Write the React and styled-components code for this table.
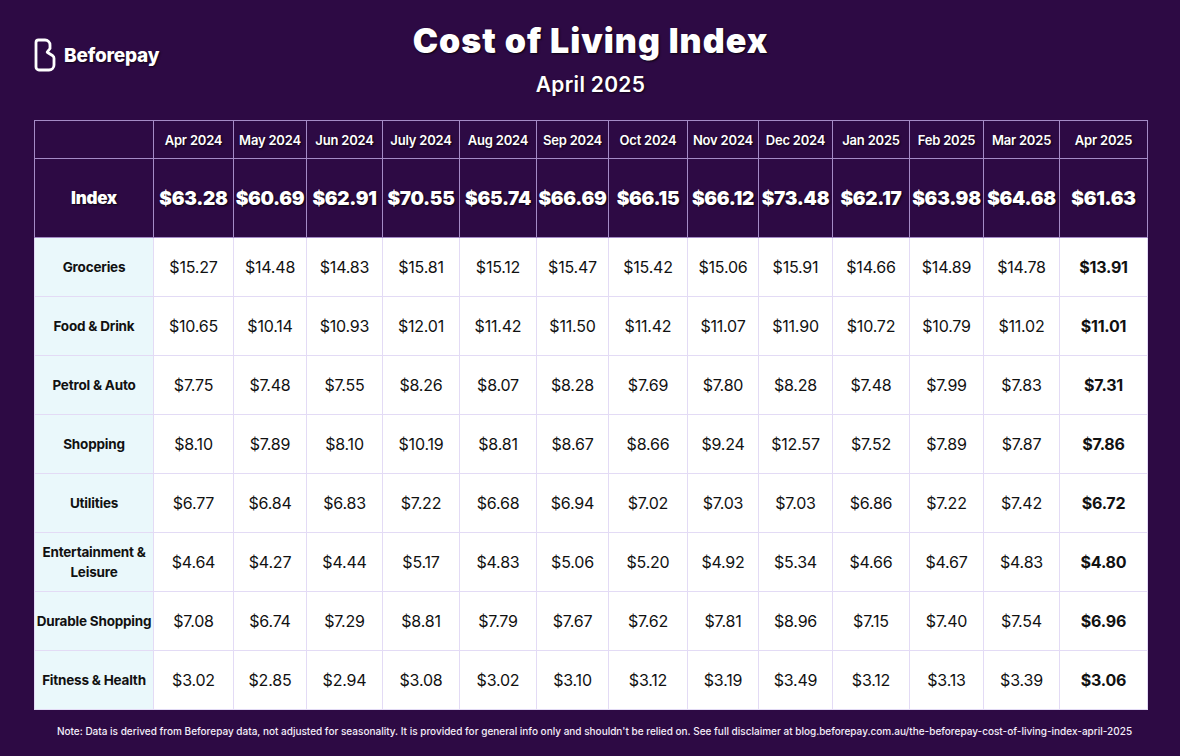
import React from "react";
import styled, { createGlobalStyle } from "styled-components";

const GlobalStyle = createGlobalStyle`
  html, body {
    margin: 0;
    padding: 0;
    background: #2d0a44;
  }
  body {
    font-family: Inter, "Noto Sans", "Liberation Sans", sans-serif;
  }
`;

const Page = styled.div`
  width: 1180px;
  height: 756px;
  box-sizing: border-box;
  padding: 0 33px 0 34px;
  background: #2d0a44;
  color: #ffffff;
  display: flex;
  flex-direction: column;
`;

const Header = styled.header`
  height: 120px;
  display: grid;
  grid-template-columns: 1fr auto 1fr;
  align-items: start;
`;

const Brand = styled.div`
  display: flex;
  align-items: center;
  gap: 8px;
  padding-top: 38px;
  font-size: 19px;
  font-weight: 800;
  letter-spacing: -0.2px;
  text-shadow: 1px 1px 2px rgba(0, 0, 0, 0.7);
`;

const TitleBlock = styled.div`
  display: flex;
  flex-direction: column;
  align-items: center;
  padding-top: 22px;
`;

const Title = styled.h1`
  margin: 0;
  font-size: 34px;
  line-height: 38px;
  font-weight: 900;
  letter-spacing: 1px;
  text-shadow: 1px 1px 2px rgba(0, 0, 0, 0.8);
`;

const Subtitle = styled.div`
  margin-top: 12px;
  font-size: 21px;
  font-weight: 600;
  letter-spacing: 0.3px;
  text-shadow: 1px 1px 2px rgba(0, 0, 0, 0.7);
`;

const Table = styled.table`
  width: 1113px;
  border-collapse: collapse;
  table-layout: fixed;
  border: 1px solid #1c0530;
`;

const HeadCell = styled.th`
  background: #2d0a44;
  border: 1px solid #a48bc6;
  color: #ffffff;
  text-align: center;
  padding: 0;
  height: ${(p) => (p.$tall ? "78px" : "37px")};
  font-size: ${(p) => (p.$tall ? (p.$label ? "17px" : "19px") : "13px")};
  font-weight: ${(p) => (p.$tall ? 900 : 600)};
  letter-spacing: ${(p) => (p.$tall ? "-0.3px" : "-0.2px")};
  white-space: nowrap;
  text-shadow: 1px 1px 2px rgba(0, 0, 0, 0.8);
`;

const LabelCell = styled.th`
  background: #eaf8fb;
  border: 1px solid #e3dbf5;
  color: #111111;
  height: 58px;
  padding: 0;
  font-size: 13.5px;
  line-height: 20px;
  font-weight: 700;
  letter-spacing: -0.2px;
  text-align: center;
  white-space: nowrap;
`;

const ValueCell = styled.td`
  background: #ffffff;
  border: 1px solid #e3dbf5;
  color: #111111;
  text-align: center;
  padding: 0;
  font-size: 16px;
  font-weight: ${(p) => (p.$bold ? 700 : 400)};
  letter-spacing: -0.2px;
`;

const Note = styled.p`
  margin: 15px 0 0;
  padding-left: 8px;
  text-align: center;
  font-size: 10px;
  font-weight: 500;
  color: #f4eefa;
  white-space: nowrap;
`;

const months = [
  "Apr 2024", "May 2024", "Jun 2024", "July 2024", "Aug 2024", "Sep 2024",
  "Oct 2024", "Nov 2024", "Dec 2024", "Jan 2025", "Feb 2025", "Mar 2025", "Apr 2025",
];

const colWidths = [119, 80, 73, 76, 77, 77, 72, 79, 71, 74, 77, 74, 76, 88];

const index = [
  "$63.28", "$60.69", "$62.91", "$70.55", "$65.74", "$66.69", "$66.15",
  "$66.12", "$73.48", "$62.17", "$63.98", "$64.68", "$61.63",
];

const categories = [
  { name: ["Groceries"], values: ["$15.27", "$14.48", "$14.83", "$15.81", "$15.12", "$15.47", "$15.42", "$15.06", "$15.91", "$14.66", "$14.89", "$14.78", "$13.91"] },
  { name: ["Food & Drink"], values: ["$10.65", "$10.14", "$10.93", "$12.01", "$11.42", "$11.50", "$11.42", "$11.07", "$11.90", "$10.72", "$10.79", "$11.02", "$11.01"] },
  { name: ["Petrol & Auto"], values: ["$7.75", "$7.48", "$7.55", "$8.26", "$8.07", "$8.28", "$7.69", "$7.80", "$8.28", "$7.48", "$7.99", "$7.83", "$7.31"] },
  { name: ["Shopping"], values: ["$8.10", "$7.89", "$8.10", "$10.19", "$8.81", "$8.67", "$8.66", "$9.24", "$12.57", "$7.52", "$7.89", "$7.87", "$7.86"] },
  { name: ["Utilities"], values: ["$6.77", "$6.84", "$6.83", "$7.22", "$6.68", "$6.94", "$7.02", "$7.03", "$7.03", "$6.86", "$7.22", "$7.42", "$6.72"] },
  { name: ["Entertainment &", "Leisure"], values: ["$4.64", "$4.27", "$4.44", "$5.17", "$4.83", "$5.06", "$5.20", "$4.92", "$5.34", "$4.66", "$4.67", "$4.83", "$4.80"] },
  { name: ["Durable Shopping"], values: ["$7.08", "$6.74", "$7.29", "$8.81", "$7.79", "$7.67", "$7.62", "$7.81", "$8.96", "$7.15", "$7.40", "$7.54", "$6.96"] },
  { name: ["Fitness & Health"], values: ["$3.02", "$2.85", "$2.94", "$3.08", "$3.02", "$3.10", "$3.12", "$3.19", "$3.49", "$3.12", "$3.13", "$3.39", "$3.06"] },
];

function Logo() {
  return (
    <svg width="22" height="34" viewBox="0 0 22 34" fill="none">
      <path
        d="M4.5 2 H11 A5 5 0 0 1 16 7 V10.5 L13.2 14.2 L18.8 17.8 A3 3 0 0 1 20 20.2 V27 A5 5 0 0 1 15 32 H5 A3 3 0 0 1 2 29 V4.5 A2.5 2.5 0 0 1 4.5 2 Z"
        stroke="#ffffff"
        strokeWidth="2.8"
        strokeLinejoin="round"
      />
    </svg>
  );
}

export default function App() {
  return (
    <>
      <GlobalStyle />
      <Page>
        <Header>
          <Brand>
            <Logo />
            Beforepay
          </Brand>
          <TitleBlock>
            <Title>Cost of Living Index</Title>
            <Subtitle>April 2025</Subtitle>
          </TitleBlock>
          <div />
        </Header>

        <Table>
          <colgroup>
            {colWidths.map((w, i) => (
              <col key={i} style={{ width: w }} />
            ))}
          </colgroup>
          <thead>
            <tr>
              <HeadCell />
              {months.map((m) => (
                <HeadCell key={m}>{m}</HeadCell>
              ))}
            </tr>
            <tr>
              <HeadCell $tall $label>Index</HeadCell>
              {index.map((v, i) => (
                <HeadCell key={i} $tall>{v}</HeadCell>
              ))}
            </tr>
          </thead>
          <tbody>
            {categories.map((c) => (
              <tr key={c.name.join(" ")}>
                <LabelCell>
                  {c.name.map((line, i) => (
                    <React.Fragment key={line}>
                      {i > 0 && <br />}
                      {line}
                    </React.Fragment>
                  ))}
                </LabelCell>
                {c.values.map((v, i) => (
                  <ValueCell key={i} $bold={i === c.values.length - 1}>{v}</ValueCell>
                ))}
              </tr>
            ))}
          </tbody>
        </Table>

        <Note>
          Note: Data is derived from Beforepay data, not adjusted for seasonality. It is provided for general info only and shouldn't be relied on. See full disclaimer at blog.beforepay.com.au/the-beforepay-cost-of-living-index-april-2025
        </Note>
      </Page>
    </>
  );
}
